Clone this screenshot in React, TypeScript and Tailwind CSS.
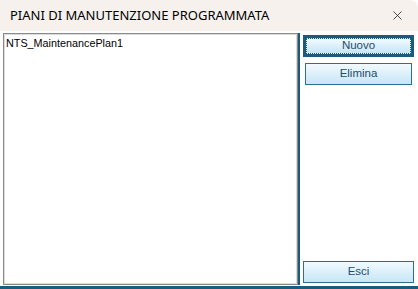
import { X } from 'lucide-react';

const btn =
  'w-full h-[22px] flex items-center justify-center border border-[#2e6f8f] bg-gradient-to-b from-[#f2fafe] to-[#c6e6f7] text-[11.5px] text-[#1e4d6b]';

export default function App() {
  return (
    <div className="w-[418px] h-[289px] flex flex-col bg-white rounded-tr-[8px] overflow-hidden" style={{ fontFamily: '"Noto Sans", "Liberation Sans", sans-serif' }}>
      <div className="h-[31px] shrink-0 flex items-center justify-between pl-[10px] pr-[13px] bg-[#f6f1ed]">
        <span className="text-[13px] text-black">PIANI DI MANUTENZIONE PROGRAMMATA</span>
        <X className="w-[15px] h-[15px] text-[#222]" strokeWidth={1.3} />
      </div>
      <div className="flex-1 flex flex-col bg-white">
        <div className="flex-1 flex pt-[2px]">
          <div className="ml-[3px] w-[295px] border border-[#8a8a8a] flex">
            <div className="flex-1 border border-[#dcdcdc] pl-[1px] pt-[1px]">
              <div className="text-[10.8px] leading-[14px] text-black" style={{ fontFamily: '"Liberation Sans", Arial, sans-serif' }}>
                NTS_MaintenancePlan1
              </div>
            </div>
          </div>
          <div className="w-[2px] bg-[#1d5b7c]" />
          <div className="flex-1 flex flex-col pl-[3px] pr-[4px] pt-[2px] pb-[2px]" style={{ fontFamily: '"Liberation Sans", Arial, sans-serif' }}>
            <div className="border-[3px] border-[#1d5b7c] h-[22px] flex">
              <div className="flex-1 flex items-center justify-center border border-dotted border-[#1d5b7c] bg-gradient-to-b from-[#f2fafe] to-[#c6e6f7] text-[11.5px] text-[#1e4d6b]">
                Nuovo
              </div>
            </div>
            <div className="mt-[6px] px-[2px]">
              <div className={btn}>Elimina</div>
            </div>
            <div className="flex-1" />
            <div className={btn}>Esci</div>
          </div>
        </div>
        <div className="h-[3px] bg-[#1d5b7c] mt-[1px]" />
      </div>
    </div>
  );
}
